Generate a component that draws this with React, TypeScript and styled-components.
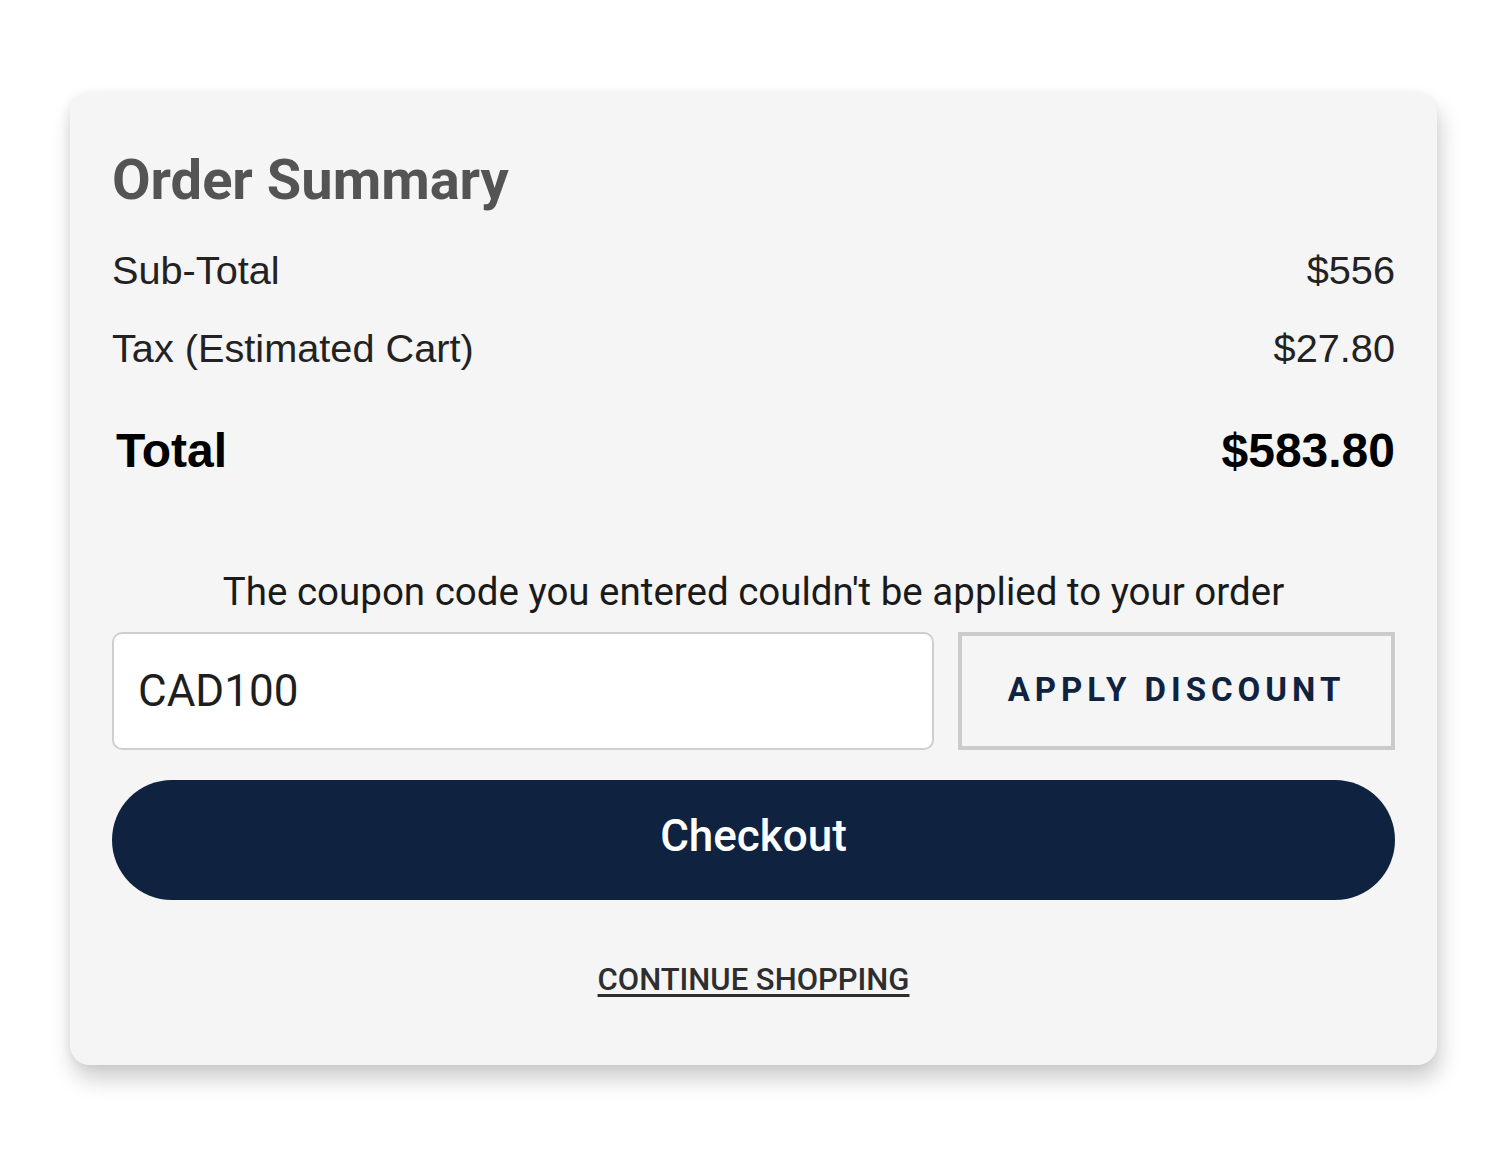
import React from "react";
import styled, { createGlobalStyle } from "styled-components";

const GlobalStyle = createGlobalStyle`
  body {
    margin: 0;
    background: #ffffff;
    font-family: Roboto, "Liberation Sans", Arial, sans-serif;
  }
`;

const Page = styled.div`
  padding: 93px 63px 80px 70px;
`;

const Card = styled.section`
  background: #f5f5f5;
  border-radius: 20px;
  box-shadow: 3px 14px 22px rgba(0, 0, 0, 0.2), -2px 0 10px rgba(0, 0, 0, 0.06);
  padding: 59px 42px 67px 42px;
  display: flex;
  flex-direction: column;
`;

const Title = styled.h2`
  margin: 0;
  font-family: Roboto, sans-serif;
  font-weight: 700;
  font-size: 56px;
  line-height: 56px;
  color: #545454;
`;

const Row = styled.div<{ $top: number; $total?: boolean }>`
  display: flex;
  justify-content: space-between;
  align-items: center;
  margin-top: ${(p) => p.$top}px;
  font-family: "Liberation Sans", Arial, sans-serif;
  font-size: ${(p) => (p.$total ? "48px" : "39.7px")};
  font-weight: ${(p) => (p.$total ? 700 : 400)};
  line-height: ${(p) => (p.$total ? "56px" : "40px")};
  color: ${(p) => (p.$total ? "#000" : "#222")};
  padding-left: ${(p) => (p.$total ? "4px" : "0")};
`;

const Message = styled.p`
  margin: 91px 0 0;
  text-align: center;
  font-family: Roboto, sans-serif;
  font-size: 38.5px;
  line-height: 44px;
  color: #1a1a1a;
`;

const CouponRow = styled.div`
  display: grid;
  grid-template-columns: 1fr 437px;
  gap: 24px;
  margin-top: 18px;
  height: 118px;
`;

const CouponInput = styled.input`
  box-sizing: border-box;
  height: 118px;
  width: 100%;
  background: #ffffff;
  border: 2px solid #cfcfcf;
  border-radius: 10px;
  padding: 0 24px;
  font-family: Roboto, sans-serif;
  font-size: 44px;
  color: #1e1e1e;
  outline: none;
`;

const ApplyButton = styled.button`
  box-sizing: border-box;
  height: 118px;
  background: #f5f5f5;
  border: 4px solid #cbcbcb;
  font-family: Roboto, sans-serif;
  font-weight: 700;
  font-size: 33px;
  letter-spacing: 5px;
  color: #0f2340;
  cursor: pointer;
  padding: 0 0 4px 0;
`;

const CheckoutButton = styled.button`
  margin-top: 30px;
  height: 120px;
  border: none;
  border-radius: 60px;
  background: #0f2340;
  color: #ffffff;
  font-family: Roboto, sans-serif;
  font-weight: 500;
  font-size: 44px;
  padding: 0 0 8px;
  cursor: pointer;
`;

const ContinueLink = styled.a`
  align-self: center;
  margin-top: 62px;
  font-family: Roboto, sans-serif;
  font-weight: 500;
  font-size: 31px;
  line-height: 36px;
  color: #2e2e2e;
  text-decoration: underline;
  text-underline-offset: 4px;
  text-decoration-thickness: 3px;
  cursor: pointer;
`;

export default function App() {
  return (
    <Page>
      <GlobalStyle />
      <Card>
        <Title>Order Summary</Title>
        <Row $top={42}>
          <span>Sub-Total</span>
          <span>$556</span>
        </Row>
        <Row $top={38}>
          <span>Tax (Estimated Cart)</span>
          <span>$27.80</span>
        </Row>
        <Row $top={55} $total>
          <span>Total</span>
          <span>$583.80</span>
        </Row>
        <Message>The coupon code you entered couldn't be applied to your order</Message>
        <CouponRow>
          <CouponInput defaultValue="CAD100" />
          <ApplyButton>APPLY DISCOUNT</ApplyButton>
        </CouponRow>
        <CheckoutButton>Checkout</CheckoutButton>
        <ContinueLink>CONTINUE SHOPPING</ContinueLink>
      </Card>
    </Page>
  );
}
